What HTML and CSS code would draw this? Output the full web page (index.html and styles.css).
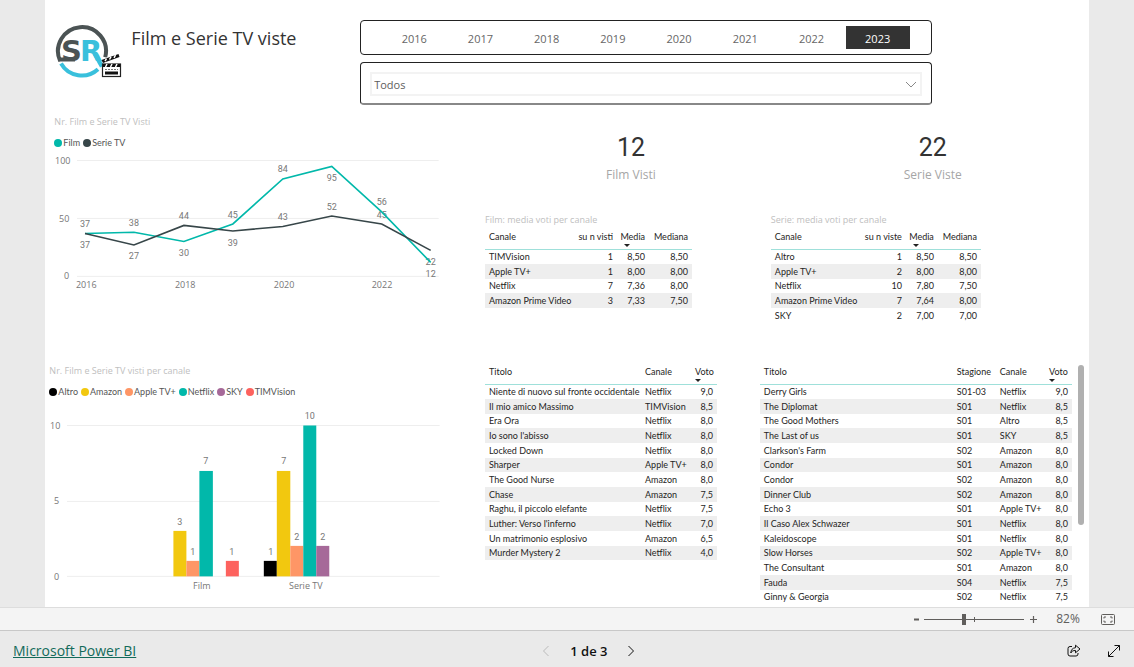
FILE: index.html
```html
<!DOCTYPE html>
<html lang="it">
<head>
<meta charset="utf-8">
<meta name="viewport" content="width=device-width, initial-scale=1">
<title>Film e Serie TV viste</title>
<link rel="stylesheet" href="styles.css">
</head>
<body>
<main class="report">
  <header class="top">
    <div class="brand">
      <svg class="logo" viewBox="0 0 67 56" role="img" aria-label="SR">
        <path d="M5.200 37.100A24 24 0 1 1 50.200 33.200" fill="none" stroke="#4b5354" stroke-width="4"/>
        <path d="M6 39.500A24 24 0 0 0 43 45.200" fill="none" stroke="#39c0dc" stroke-width="4"/>
        <path d="M4 35.500H20" stroke="#4b5354" stroke-width="4"/>
        <path d="M39.500 29L47 42.500" stroke="#39c0dc" stroke-width="4.500"/>
        <text class="logo-letter logo-s" x="6" y="37">S</text>
        <text class="logo-letter logo-r" x="25" y="37">R</text>
        <g>
          <path d="M46.500 35.500L63 29.500L64.500 33L48 39.500Z" fill="#fff"/>
          <path d="M46.500 36L63.500 30L64.500 33L48 39Z" fill="#111"/>
          <path d="M50 37.200l1.500-2.600M54.500 35.500l1.500-2.600M59 33.800l1.500-2.600" stroke="#fff" stroke-width="1.500"/>
          <rect x="47.500" y="40" width="18" height="12.500" fill="#fff" stroke="#222" stroke-width="1.200"/>
          <path d="M48 41.500H65" stroke="#111" stroke-width="3"/>
          <path d="M50.500 43l1.500-3M55.500 43l1.500-3M60.500 43l1.500-3" stroke="#fff" stroke-width="1.500"/>
          <path d="M50 45.500H63" stroke="#777" stroke-dasharray="2 1"/>
          <path d="M50 49H63" stroke="#111" stroke-width="3"/>
        </g>
      </svg>
      <h1>Film e Serie TV viste</h1>
    </div>
    <div class="filters">
      <div class="years">
        <button type="button">2016</button><button type="button">2017</button><button type="button">2018</button><button type="button">2019</button><button type="button">2020</button><button type="button">2021</button><button type="button">2022</button><button type="button" class="selected" aria-pressed="true">2023</button>
      </div>
      <div class="channel">
        <select aria-label="Canale"><option>Todos</option></select>
        <svg class="chevron" viewBox="0 0 12 7" aria-hidden="true"><path d="M1 1l5 5 5-5"/></svg>
      </div>
    </div>
  </header>

  <section class="row trends">
    <div class="panel line-panel">
      <h2>Nr. Film e Serie TV Visti</h2>
      <ul class="legend">
        <li><i class="dot netflix"></i>Film</li><li><i class="dot serie"></i>Serie TV</li>
      </ul>
      <svg class="chart" viewBox="0 0 395 145" role="img" aria-label="Nr. Film e Serie TV Visti">
        <path class="grid" d="M32 10.500H394M32 68.500H394M32 126.500H394"/>
        <g class="axis">
          <text x="10" y="14">100</text><text x="14" y="72">50</text><text x="19" y="129">0</text>
          <text x="31" y="138">2016</text><text x="130" y="138">2018</text><text x="229" y="138">2020</text><text x="327" y="138">2022</text>
        </g>
        <g class="value">
          <text x="40" y="77">37</text><text x="89" y="76">38</text><text x="139" y="106">30</text><text x="188" y="68">45</text>
          <text x="238" y="22">84</text><text x="287" y="31">95</text><text x="337" y="55">56</text><text x="386" y="127">12</text>
          <text x="40" y="98">37</text><text x="89" y="109">27</text><text x="139" y="69">44</text><text x="188" y="96">39</text>
          <text x="238" y="70">43</text><text x="287" y="60">52</text><text x="337" y="68">45</text><text x="386" y="115">22</text>
        </g>
        <polyline class="line line-film" points="40,83.500 89,82.300 139,91.500 188,74 238,29 287,16.500 337,62 386,112.500"/>
        <polyline class="line line-serie" points="40,83.500 89,95 139,75.500 188,81 238,76.500 287,66 337,74 386,100.500"/>
      </svg>
    </div>
    <div class="panel">
      <div class="kpi"><strong>12</strong><span>Film Visti</span></div>
      <h2>Film: media voti per canale</h2>
      <table class="stats">
        <thead><tr><th>Canale</th><th class="num">su n visti</th><th class="num sorted">Media</th><th class="num">Mediana</th></tr></thead>
        <tbody>
          <tr><td>TIMVision</td><td class="num">1</td><td class="num">8,50</td><td class="num">8,50</td></tr>
          <tr><td>Apple TV+</td><td class="num">1</td><td class="num">8,00</td><td class="num">8,00</td></tr>
          <tr><td>Netflix</td><td class="num">7</td><td class="num">7,36</td><td class="num">8,00</td></tr>
          <tr><td>Amazon Prime Video</td><td class="num">3</td><td class="num">7,33</td><td class="num">7,50</td></tr>
        </tbody>
      </table>
    </div>
    <div class="panel">
      <div class="kpi"><strong>22</strong><span>Serie Viste</span></div>
      <h2>Serie: media voti per canale</h2>
      <table class="stats stats-series">
        <thead><tr><th>Canale</th><th class="num">su n viste</th><th class="num sorted">Media</th><th class="num">Mediana</th></tr></thead>
        <tbody>
          <tr><td>Altro</td><td class="num">1</td><td class="num">8,50</td><td class="num">8,50</td></tr>
          <tr><td>Apple TV+</td><td class="num">2</td><td class="num">8,00</td><td class="num">8,00</td></tr>
          <tr><td>Netflix</td><td class="num">10</td><td class="num">7,80</td><td class="num">7,50</td></tr>
          <tr><td>Amazon Prime Video</td><td class="num">7</td><td class="num">7,64</td><td class="num">8,00</td></tr>
          <tr><td>SKY</td><td class="num">2</td><td class="num">7,00</td><td class="num">7,00</td></tr>
        </tbody>
      </table>
    </div>
  </section>

  <section class="row details">
    <div class="panel bar-panel">
      <h2>Nr. Film e Serie TV visti per canale</h2>
      <ul class="legend">
        <li><i class="dot altro"></i>Altro</li><li><i class="dot amazon"></i>Amazon</li><li><i class="dot apple"></i>Apple TV+</li><li><i class="dot netflix"></i>Netflix</li><li><i class="dot sky"></i>SKY</li><li><i class="dot tim"></i>TIMVision</li>
      </ul>
      <svg class="chart" viewBox="0 0 395 190" role="img" aria-label="Nr. Film e Serie TV visti per canale">
        <path class="grid" d="M22 17.500H395M22 93.500H395M22 168.500H395"/>
        <g class="axis">
          <text x="5" y="21">10</text><text x="9" y="96">5</text><text x="9" y="172">0</text>
          <text class="mid" x="157" y="181">Film</text><text class="mid" x="261" y="181">Serie TV</text>
        </g>
        <rect class="amazon" x="128.500" y="123" width="13" height="45.500"/>
        <rect class="apple" x="141.500" y="153" width="13" height="15.500"/>
        <rect class="netflix" x="154.500" y="63" width="13.500" height="105.500"/>
        <rect class="tim" x="181" y="153" width="13" height="15.500"/>
        <rect class="altro" x="219" y="153" width="13" height="15.500"/>
        <rect class="amazon" x="232" y="63" width="13.500" height="105.500"/>
        <rect class="apple" x="245.500" y="138" width="13" height="30.500"/>
        <rect class="netflix" x="258.500" y="17.500" width="13" height="151"/>
        <rect class="sky" x="271.500" y="138" width="13" height="30.500"/>
        <g class="value">
          <text x="135" y="117">3</text><text x="148" y="147">1</text><text x="161" y="56">7</text><text x="187" y="147">1</text>
          <text x="226" y="147">1</text><text x="239" y="56">7</text><text x="252" y="132">2</text><text x="265" y="11">10</text><text x="278" y="132">2</text>
        </g>
      </svg>
    </div>
    <div class="panel">
      <table class="films">
        <thead><tr><th>Titolo</th><th>Canale</th><th class="num sorted">Voto</th></tr></thead>
        <tbody>
          <tr><td>Niente di nuovo sul fronte occidentale</td><td>Netflix</td><td class="num">9,0</td></tr>
          <tr><td>Il mio amico Massimo</td><td>TIMVision</td><td class="num">8,5</td></tr>
          <tr><td>Era Ora</td><td>Netflix</td><td class="num">8,0</td></tr>
          <tr><td>Io sono l'abisso</td><td>Netflix</td><td class="num">8,0</td></tr>
          <tr><td>Locked Down</td><td>Netflix</td><td class="num">8,0</td></tr>
          <tr><td>Sharper</td><td>Apple TV+</td><td class="num">8,0</td></tr>
          <tr><td>The Good Nurse</td><td>Amazon</td><td class="num">8,0</td></tr>
          <tr><td>Chase</td><td>Amazon</td><td class="num">7,5</td></tr>
          <tr><td>Raghu, il piccolo elefante</td><td>Netflix</td><td class="num">7,5</td></tr>
          <tr><td>Luther: Verso l'inferno</td><td>Netflix</td><td class="num">7,0</td></tr>
          <tr><td>Un matrimonio esplosivo</td><td>Amazon</td><td class="num">6,5</td></tr>
          <tr><td>Murder Mystery 2</td><td>Netflix</td><td class="num">4,0</td></tr>
        </tbody>
      </table>
    </div>
    <div class="panel scroller">
      <table class="series">
        <thead><tr><th>Titolo</th><th>Stagione</th><th>Canale</th><th class="num sorted">Voto</th></tr></thead>
        <tbody>
          <tr><td>Derry Girls</td><td>S01-03</td><td>Netflix</td><td class="num">9,0</td></tr>
          <tr><td>The Diplomat</td><td>S01</td><td>Netflix</td><td class="num">8,5</td></tr>
          <tr><td>The Good Mothers</td><td>S01</td><td>Altro</td><td class="num">8,5</td></tr>
          <tr><td>The Last of us</td><td>S01</td><td>SKY</td><td class="num">8,5</td></tr>
          <tr><td>Clarkson's Farm</td><td>S02</td><td>Amazon</td><td class="num">8,0</td></tr>
          <tr><td>Condor</td><td>S01</td><td>Amazon</td><td class="num">8,0</td></tr>
          <tr><td>Condor</td><td>S02</td><td>Amazon</td><td class="num">8,0</td></tr>
          <tr><td>Dinner Club</td><td>S02</td><td>Amazon</td><td class="num">8,0</td></tr>
          <tr><td>Echo 3</td><td>S01</td><td>Apple TV+</td><td class="num">8,0</td></tr>
          <tr><td>Il Caso Alex Schwazer</td><td>S01</td><td>Netflix</td><td class="num">8,0</td></tr>
          <tr><td>Kaleidoscope</td><td>S01</td><td>Netflix</td><td class="num">8,0</td></tr>
          <tr><td>Slow Horses</td><td>S02</td><td>Apple TV+</td><td class="num">8,0</td></tr>
          <tr><td>The Consultant</td><td>S01</td><td>Amazon</td><td class="num">8,0</td></tr>
          <tr><td>Fauda</td><td>S04</td><td>Netflix</td><td class="num">7,5</td></tr>
          <tr><td>Ginny &amp; Georgia</td><td>S02</td><td>Netflix</td><td class="num">7,5</td></tr>
        </tbody>
      </table>
      <div class="scroll-thumb"></div>
    </div>
  </section>
</main>

<div class="zoombar">
  <button type="button" aria-label="Riduci"><svg viewBox="0 0 9 9"><path d="M2 4.500H7" stroke-width="2"/></svg></button>
  <input type="range" min="0" max="100" value="40" aria-label="Zoom">
  <button type="button" class="plus" aria-label="Ingrandisci"><svg viewBox="0 0 9 9"><path d="M1 4.500H8M4.500 1V8" stroke-width="1.200"/></svg></button>
  <span class="percent">82%</span>
  <button type="button" class="fit" aria-label="Adatta alla pagina"><svg viewBox="0 0 14 11"><rect x="0.500" y="0.500" width="13" height="10" rx="1"/><path d="M5 3H3v1.500M9 3h2v1.500M5 8H3V6.500M9 8h2V6.500"/></svg></button>
</div>

<footer class="footer">
  <a href="#">Microsoft Power BI</a>
  <nav class="pager">
    <button type="button" aria-label="Pagina precedente" disabled><svg viewBox="0 0 8 12"><path d="M6.500 1L1.500 6l5 5"/></svg></button>
    <span>1 de 3</span>
    <button type="button" aria-label="Pagina successiva"><svg viewBox="0 0 8 12"><path d="M1.500 1l5 5-5 5"/></svg></button>
  </nav>
  <div class="actions">
    <button type="button" aria-label="Condividi"><svg viewBox="0 0 14 14"><path d="M5 2.500H3a2 2 0 0 0-2 2V10a2 2 0 0 0 2 2h6a2 2 0 0 0 2-2V9"/><path d="M8.500 1.200L13 5 8.500 8.800V6.500C6.200 6.400 4.800 7.100 3.800 9c.2-3.200 1.700-5 4.700-5.300z"/></svg></button>
    <button type="button" aria-label="Schermo intero"><svg viewBox="0 0 14 14"><path d="M1.500 12.500l11-11M7.500 1.500h5v5M6.500 12.500h-5v-5"/></svg></button>
  </div>
</footer>
</body>
</html>
```
FILE: styles.css
```css
* { box-sizing: border-box; }

body {
  margin: 0;
  min-height: 100vh;
  display: flex;
  flex-direction: column;
  background: #eaeaea;
  color: #252423;
  font-family: "Open Sans", "Noto Sans", sans-serif;
  font-size: 9px;
  line-height: 12px;
}

h1, h2, ul { margin: 0; padding: 0; font-weight: 400; }

button {
  margin: 0;
  padding: 0;
  border: 0;
  background: none;
  font: inherit;
  color: inherit;
}

button svg { display: block; fill: none; stroke: currentColor; }

.report {
  flex: 1;
  margin: 0 4%;
  background: #fff;
}

.top {
  display: grid;
  grid-template-columns: 315fr 572fr 157fr;
  height: 112px;
  padding-top: 20px;
}

.brand { display: flex; gap: 9px; padding: 4px 0 0 10px; }
.logo { width: 67px; height: 56px; }
.logo-letter { font: bold 29px "DejaVu Sans", sans-serif; }
.logo-s { fill: #4b5354; }
.logo-r { fill: #39c0dc; }

h1 { font-size: 18px; line-height: 28px; color: #333; white-space: nowrap; }

.filters { display: flex; flex-direction: column; gap: 7px; }

.years {
  display: flex;
  height: 35px;
  padding: 5px 20px;
  border: 1px solid #222;
  border-radius: 4px;
}

.years button {
  flex: 1;
  margin: 0 1px;
  padding-top: 2px;
  font-size: 11px;
  color: #666;
}

.years .selected { background: #333; color: #fff; }

.channel {
  position: relative;
  height: 43px;
  padding: 9px;
  border: 1px solid #222;
  border-bottom: 2px solid #888;
  border-radius: 4px;
}

.channel select {
  appearance: none;
  display: block;
  width: 100%;
  height: 24px;
  padding: 0 2px;
  border: 2px solid #f3f3f3;
  background: #fff;
  color: #605e5c;
  font: 11px "Open Sans", sans-serif;
}

.chevron {
  position: absolute;
  right: 14px;
  top: 18px;
  width: 12px;
  height: 7px;
  fill: none;
  stroke: #888;
  pointer-events: none;
}

.row { display: grid; }
.trends { grid-template-columns: 440fr 286fr 318fr; height: 253px; }
.details { grid-template-columns: 440fr 275fr 329fr; height: 242px; }

h2 { font-size: 9px; line-height: 12px; color: #c0c0c0; }

.line-panel { padding: 4px 45px 0 0; }
.line-panel h2, .line-panel .legend { padding-left: 9px; }
.bar-panel { padding: 0 45px 0 0; }
.bar-panel h2, .bar-panel .legend { padding-left: 4px; }

.legend {
  display: flex;
  gap: 3px;
  margin-top: 9px;
  list-style: none;
  color: #555;
  font-family: Lato, sans-serif;
}

.legend li { display: flex; align-items: center; gap: 1px; }
.dot { width: 8px; height: 8px; border-radius: 50%; }

.altro { background: #000; fill: #000; }
.amazon { background: #f2c80f; fill: #f2c80f; }
.apple { background: #fe9666; fill: #fe9666; }
.netflix { background: #01b8aa; fill: #01b8aa; }
.sky { background: #a66999; fill: #a66999; }
.tim { background: #fd625e; fill: #fd625e; }
.serie { background: #374649; }

.chart { display: block; width: 100%; }
.line-panel .chart { margin-top: 1px; }
.bar-panel .chart { margin-top: 10px; }
.chart .grid { stroke: #eee; }
.axis { fill: #777; font-size: 9px; }
.value { fill: #777; font: 9px Roboto, sans-serif; text-anchor: middle; }
.mid { text-anchor: middle; }
.line { fill: none; stroke-width: 1.6; }
.line-film { stroke: #01b8aa; }
.line-serie { stroke: #374649; }

.kpi {
  display: flex;
  flex-direction: column;
  align-items: center;
  height: 102px;
  padding: 21px 0 0 6px;
}

.kpi strong { font: 400 25px/30px Roboto, sans-serif; color: #333; }
.kpi span { margin-top: 3px; font-size: 12px; line-height: 18px; color: #a6a6a6; }

table { border-collapse: collapse; table-layout: fixed; font-family: Lato, sans-serif; }
th, td { padding: 0 4px; font-weight: 400; text-align: left; white-space: nowrap; }
th { height: 19px; padding-bottom: 4px; border-bottom: 1px solid #9fe0da; }
td { height: 15px; line-height: 14px; }
tr:nth-child(3n) td { height: 14px; }
tbody tr:nth-child(even) { background: #eee; }
.num { text-align: right; }
.sorted { position: relative; }

.sorted::after {
  content: "";
  position: absolute;
  left: 50%;
  bottom: 2px;
  margin-left: -9px;
  border: 3px solid transparent;
  border-top-color: #222;
  border-bottom: 0;
}

.stats { width: 207px; margin-top: 4px; }
.stats th:nth-child(1) { width: 90px; }
.stats th:nth-child(2) { width: 42px; }
.stats th:nth-child(3) { width: 32px; }
.stats th { padding-left: 0; }
.stats th:first-child { padding-left: 4px; }
.stats-series { width: 210px; }
.stats-series th:nth-child(1) { width: 93px; }

.films { width: 232px; }
.films th:nth-child(1) { width: 156px; }
.films th:nth-child(2) { width: 50px; }

.series { width: 312px; }
.series th:nth-child(1) { width: 193px; }
.series th:nth-child(2) { width: 43px; }
.series th:nth-child(3) { width: 49px; }

.scroller { display: flex; align-items: flex-start; gap: 6px; }
.scroll-thumb { width: 6px; height: 160px; border-radius: 3px; background: #b0b0b0; }

.zoombar {
  display: flex;
  align-items: center;
  justify-content: flex-end;
  gap: 3px;
  height: 24px;
  padding-right: 19px;
  border-top: 1px solid #ddd;
  border-bottom: 1px solid #c8c8c8;
  background: #f4f4f4;
  color: #605e5c;
}

.zoombar svg { width: 9px; height: 9px; }
.zoombar .plus { margin-left: 2px; }
.zoombar .fit svg { width: 14px; height: 11px; }
.percent { width: 38px; margin: 0 11px 0 8px; font-size: 12px; text-align: center; }

input[type="range"] {
  appearance: none;
  width: 100px;
  height: 12px;
  margin: 0;
  background:
    linear-gradient(#605e5c, #605e5c) 50px 50% / 1px 5px no-repeat,
    linear-gradient(#605e5c, #605e5c) 0 50% / 100% 1px no-repeat;
}

input[type="range"]::-webkit-slider-thumb {
  appearance: none;
  width: 4px;
  height: 11px;
  background: #605e5c;
}

.footer {
  display: grid;
  grid-template-columns: 109fr auto 100fr;
  align-items: center;
  height: 36px;
  padding: 3px 13px 0;
  font-size: 14px;
  line-height: 18px;
  color: #111;
}

.footer a { color: #126a5a; }
.pager { display: flex; align-items: center; gap: 20px; font-weight: 600; font-size: 13px; }
.pager svg { width: 8px; height: 12px; }
.pager button:disabled { color: #bbb; }
.actions { display: flex; justify-content: flex-end; gap: 26px; }
.actions svg { width: 14px; height: 14px; }
```
